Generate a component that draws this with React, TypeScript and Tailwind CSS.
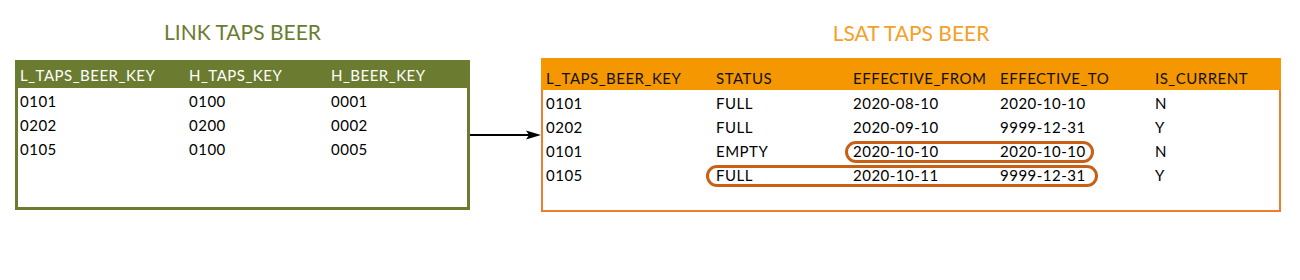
const linkRows = [
  ["0101", "0100", "0001"],
  ["0202", "0200", "0002"],
  ["0105", "0100", "0005"],
];

const satRows = [
  ["0101", "FULL", "2020-08-10", "2020-10-10", "N"],
  ["0202", "FULL", "2020-09-10", "9999-12-31", "Y"],
  ["0101", "EMPTY", "2020-10-10", "2020-10-10", "N"],
  ["0105", "FULL", "2020-10-11", "9999-12-31", "Y"],
];

const font = "font-['Lato','Open_Sans',sans-serif]";

export default function App() {
  return (
    <div className={`w-[1300px] h-[280px] bg-white flex items-start pl-[15px] ${font}`}>
      {/* link table */}
      <div className="w-[455px] flex flex-col">
        <div className="h-[60px] flex items-center justify-center pt-[4px] text-[21px] text-[#6b7c30]">
          LINK TAPS BEER
        </div>
        <div className="h-[28px] bg-[#6b7c30] grid grid-cols-[169px_142px_1fr] items-center pl-[5px] pt-[2px] text-[15px] tracking-[0.5px] text-white">
          <span>L_TAPS_BEER_KEY</span>
          <span>H_TAPS_KEY</span>
          <span>H_BEER_KEY</span>
        </div>
        <div className="h-[122px] border-[3px] border-t-0 border-[#6b7c30] pl-[2px] pt-px">
          {linkRows.map((r, i) => (
            <div key={i} className="h-[24px] grid grid-cols-[169px_142px_1fr] items-center text-[15px] tracking-[0.5px] text-black">
              {r.map((c, j) => (
                <span key={j}>{c}</span>
              ))}
            </div>
          ))}
        </div>
      </div>

      {/* arrow */}
      <div className="w-[71px] pt-[129px]">
        <svg width="71" height="12" viewBox="0 0 71 12">
          <line x1="0" y1="6" x2="62" y2="6" stroke="#000" strokeWidth="2" />
          <path d="M56 1.5 L71 6 L56 10.5 L59 6 Z" fill="#000" />
        </svg>
      </div>

      {/* satellite table */}
      <div className="w-[740px] flex flex-col">
        <div className="h-[58px] flex items-center justify-center pt-[8px] text-[21px] text-[#f5a028]">
          LSAT TAPS BEER
        </div>
        <div className="h-[32px] bg-[#f49700] grid grid-cols-[170px_137px_147px_155px_1fr] items-center pl-[5px] pt-[8px] text-[15px] tracking-[0.5px] text-[#111]">
          <span>L_TAPS_BEER_KEY</span>
          <span>STATUS</span>
          <span>EFFECTIVE_FROM</span>
          <span>EFFECTIVE_TO</span>
          <span>IS_CURRENT</span>
        </div>
        <div className="relative h-[122px] border-2 border-t-0 border-[#ee7d2e] pl-[3px] pt-px">
          {satRows.map((r, i) => (
            <div key={i} className="h-[24px] grid grid-cols-[170px_137px_147px_155px_1fr] items-center text-[15px] tracking-[0.5px] text-black">
              {r.map((c, j) => (
                <span key={j}>{c}</span>
              ))}
            </div>
          ))}
          <div className="absolute left-[302px] top-[51px] w-[249px] h-[22px] rounded-full border-[3px] border-[#c95f17]" />
          <div className="absolute left-[163px] top-[75px] w-[392px] h-[22px] rounded-full border-[3px] border-[#c95f17]" />
        </div>
      </div>
    </div>
  );
}
